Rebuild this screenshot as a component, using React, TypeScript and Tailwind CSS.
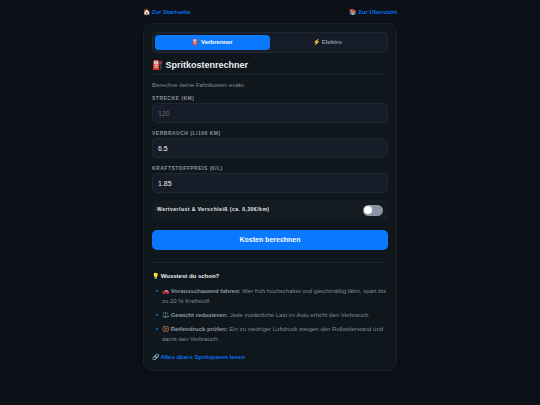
import { useState } from "react";

type FieldProps = {
  id: string;
  label: string;
  value: string;
  placeholder?: string;
  onChange: (value: string) => void;
};

const Field = ({ id, label, value, placeholder, onChange }: FieldProps) => (
  <div>
    <label
      htmlFor={id}
      className="block text-[5px] leading-[9px] font-bold uppercase tracking-widest text-[#8b95a3]"
    >
      {label}
    </label>
    <input
      id={id}
      type="text"
      inputMode="decimal"
      value={value}
      placeholder={placeholder}
      onChange={(e) => onChange(e.target.value)}
      className="block h-5 w-full rounded-[5px] border border-[#1f2733] bg-[#171d28] px-[5px] text-[7px] text-[#e9edf2] outline-none placeholder:text-[#666c75] focus:border-[#0a78ff]"
    />
  </div>
);

const tips = [
  {
    icon: "🚗",
    title: "Vorausschauend fahren:",
    text: "Wer früh hochschaltet und gleichmäßig fährt, spart bis zu 20 % Kraftstoff.",
  },
  {
    icon: "⚖️",
    title: "Gewicht reduzieren:",
    text: "Jede zusätzliche Last im Auto erhöht den Verbrauch.",
  },
  {
    icon: "🛞",
    title: "Reifendruck prüfen:",
    text: "Ein zu niedriger Luftdruck steigert den Rollwiderstand und damit den Verbrauch.",
  },
];

const App = () => {
  const [mode, setMode] = useState("verbrenner");
  const [distance, setDistance] = useState("");
  const [consumption, setConsumption] = useState("6.5");
  const [price, setPrice] = useState("1.85");
  const [wear, setWear] = useState(false);

  const tabClass = (name: string) =>
    mode === name
      ? "rounded-[4px] bg-[#0a78ff] text-white"
      : "rounded-[4px] text-[#8b95a3]";

  return (
    <div className="min-h-screen bg-[#0c1118] px-4 py-2 font-['Liberation_Sans',Arial,sans-serif] text-[#e9edf2]">
      <div className="mx-auto max-w-[254px]">
        <nav className="flex justify-between text-[6px] leading-[8px] font-bold text-[#0a6ff0]">
          <a href="#start">🏠 Zur Startseite</a>
          <a href="#uebersicht">📚 Zur Übersicht</a>
        </nav>

        <main className="mt-[7px] rounded-[9px] border border-[#18212a] bg-[#0f161c] p-2 shadow-lg">
          <div className="grid grid-cols-2 rounded-[5px] border border-[#1f2733] bg-[#171d28] p-[2px] text-[6px] leading-[15px] font-bold">
            <button type="button" onClick={() => setMode("verbrenner")} className={tabClass("verbrenner")}>
              ⛽ Verbrenner
            </button>
            <button type="button" onClick={() => setMode("elektro")} className={tabClass("elektro")}>
              ⚡ Elektro
            </button>
          </div>

          <h1 className="mt-[7px] border-b border-[#1a232c] pb-1 text-[9px] leading-[10px] font-bold">
            ⛽ Spritkostenrechner
          </h1>
          <p className="mt-[6px] text-[6px] leading-[8px] text-[#7f8996]">
            Berechne deine Fahrtkosten exakt.
          </p>

          <form onSubmit={(e) => e.preventDefault()}>
            <div className="mt-[5px] flex flex-col gap-[6px]">
              <Field id="strecke" label="Strecke (km)" value={distance} placeholder="120" onChange={setDistance} />
              <Field id="verbrauch" label="Verbrauch (L/100 km)" value={consumption} onChange={setConsumption} />
              <Field id="preis" label="Kraftstoffpreis (€/L)" value={price} onChange={setPrice} />
            </div>

            <label className="mt-[7px] flex h-5 items-center justify-between rounded-[4px] bg-[#141b21] px-[5px] text-[5px] font-bold tracking-widest">
              Wertverlust &amp; Verschleiß (ca. 0,30€/km)
              <input
                type="checkbox"
                role="switch"
                checked={wear}
                onChange={(e) => setWear(e.target.checked)}
                className="flex h-[11px] w-5 appearance-none items-center rounded-full bg-[#8b95a3] px-[1px] before:size-2 before:rounded-full before:bg-white checked:justify-end checked:bg-[#0a78ff]"
              />
            </label>

            <button
              type="submit"
              className="mt-[10px] block h-5 w-full rounded-[5px] bg-[#0a78ff] text-[7px] font-bold text-white"
            >
              Kosten berechnen
            </button>
          </form>

          <section className="mt-3 border-t border-[#1a232c] pt-[9px]">
            <h2 className="text-[6px] leading-[9px] font-bold">💡 Wusstest du schon?</h2>
            <ul className="mt-[5px] flex flex-col gap-1 pl-1 text-[6px] leading-[10px] text-[#7f8996]">
              {tips.map((tip) => (
                <li
                  key={tip.title}
                  className="flex gap-1 before:mt-1 before:size-[2px] before:shrink-0 before:rounded-full before:bg-[#0a6ff0]"
                >
                  <p>
                    {tip.icon} <strong className="text-[#8b95a3]">{tip.title}</strong> {tip.text}
                  </p>
                </li>
              ))}
            </ul>
            <a href="#spritsparen" className="mt-[9px] block text-[6px] leading-[9px] font-bold text-[#0a6ff0]">
              🔗 Alles übers Spritsparen lesen
            </a>
          </section>
        </main>
      </div>
    </div>
  );
};

export default App;
